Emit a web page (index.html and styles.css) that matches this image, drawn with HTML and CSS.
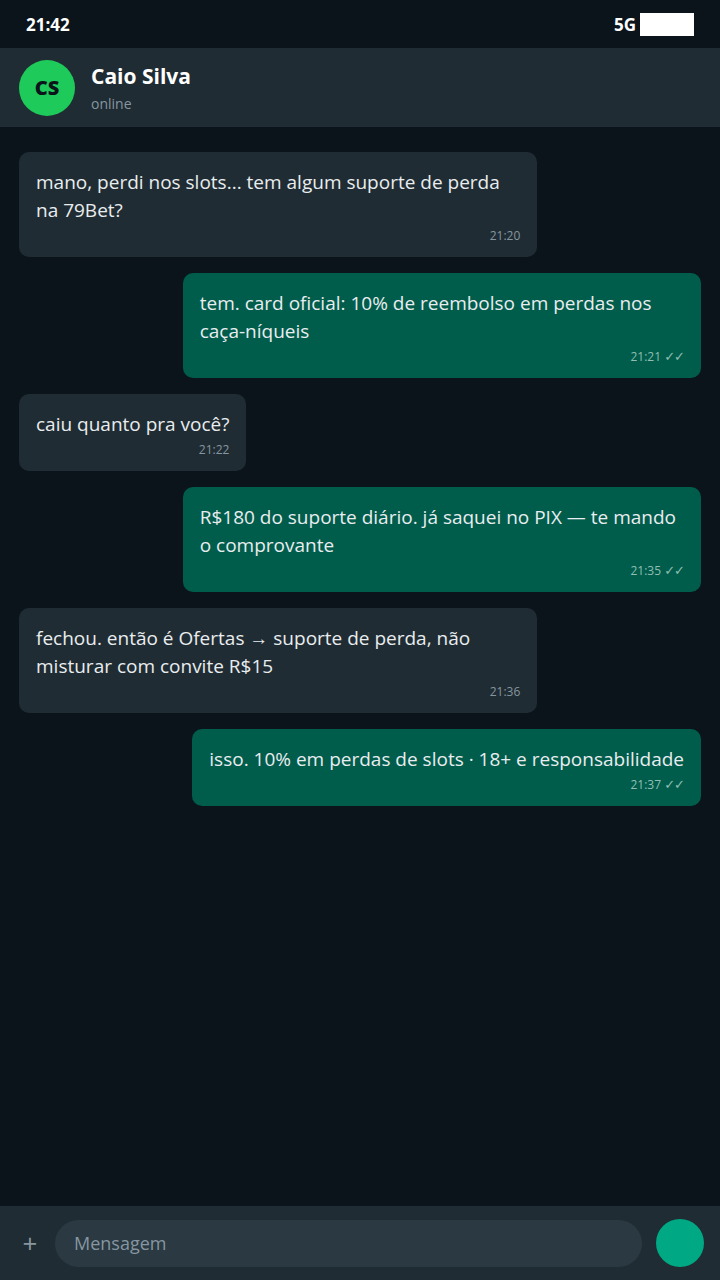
FILE: index.html
```html
<!DOCTYPE html>
<html lang="pt-BR">
<head>
  <meta charset="UTF-8" />
  <meta name="viewport" content="width=device-width, initial-scale=1.0"/>
  <title>Caio Silva</title>
  <link rel="stylesheet" href="styles.css">
</head>
<body>
  <div class="phone">
    <div class="status">
      <span class="clock">21:42</span>
      <span class="net">5G <span class="battery"></span></span>
    </div>

    <div class="header">
      <div class="avatar">CS</div>
      <div class="who">
        <div class="name">Caio Silva</div>
        <div class="state">online</div>
      </div>
    </div>

    <div class="chat">
      <div class="msg in">
        <p>mano, perdi nos slots... tem algum suporte de perda na 79Bet?</p>
        <div class="time">21:20</div>
      </div>
      <div class="msg out">
        <p>tem. card oficial: 10% de reembolso em perdas nos <span class="nw">caça-níqueis</span></p>
        <div class="time">21:21 <span class="ticks">✓✓</span></div>
      </div>
      <div class="msg in">
        <p>caiu quanto pra você?</p>
        <div class="time">21:22</div>
      </div>
      <div class="msg out">
        <p>R$180 do suporte diário. já saquei no PIX — te mando o comprovante</p>
        <div class="time">21:35 <span class="ticks">✓✓</span></div>
      </div>
      <div class="msg in">
        <p>fechou. então é Ofertas → suporte de perda, não misturar com convite R$15</p>
        <div class="time">21:36</div>
      </div>
      <div class="msg out">
        <p>isso. 10% em perdas de slots · 18+ e responsabilidade</p>
        <div class="time">21:37 <span class="ticks">✓✓</span></div>
      </div>
    </div>

    <div class="composer">
      <span class="plus">+</span>
      <div class="input">Mensagem</div>
      <div class="send"></div>
    </div>
  </div>
</body>
</html>
```

FILE: styles.css
```css
body { margin: 0; background: #0b141a; color: #e9edef; font-family: "Open Sans", "Noto Sans", Arial, sans-serif; }
.phone { height: 1280px; display: flex; flex-direction: column; }

.status { height: 48px; display: flex; align-items: center; justify-content: space-between; padding: 0 26px; font-weight: bold; font-size: 17px; color: #fff; }
.net { display: flex; align-items: center; gap: 4px; }
.battery { display: inline-block; width: 54px; height: 23px; background: #fff; }

.header { height: 80px; background: #202c33; display: flex; align-items: center; padding: 0 19px; gap: 16px; border-bottom: 1px solid #0b141a; box-sizing: border-box; }
.avatar { width: 56px; height: 56px; border-radius: 50%; background: #1ecb5a; color: #0b141a; font-weight: 800; font-size: 20px; display: flex; align-items: center; justify-content: center; }
.name { font-weight: bold; font-size: 21px; line-height: 28px; color: #fff; }
.state { font-size: 14px; color: #8696a0; margin-top: 4px; }

.chat { flex: 1; display: flex; flex-direction: column; gap: 16px; padding: 24px 19px; }
.msg { max-width: 76%; box-sizing: border-box; padding: 16px 17px 13px; border-radius: 10px; }
.msg p { margin: 0; font-size: 19px; line-height: 28px; }
.nw { white-space: nowrap; }
.in { background: #202c33; align-self: flex-start; }
.out { background: #005c4b; align-self: flex-end; }
.time { text-align: right; font-size: 12px; line-height: 16px; margin-top: 4px; color: #8696a0; }
.out .time { color: #8fbfb2; }
.ticks { font-family: "DejaVu Sans", sans-serif; font-size: 13px; letter-spacing: -1px; }

.composer { height: 74px; background: #202c33; display: flex; align-items: center; padding: 0 16px 0 19px; gap: 14px; }
.plus { color: #8696a0; font-size: 26px; width: 22px; text-align: center; }
.input { flex: 1; height: 47px; border-radius: 24px; background: #2a3942; color: #8696a0; font-size: 18px; display: flex; align-items: center; padding: 0 19px; }
.send { width: 48px; height: 48px; border-radius: 50%; background: #00a884; }
```
